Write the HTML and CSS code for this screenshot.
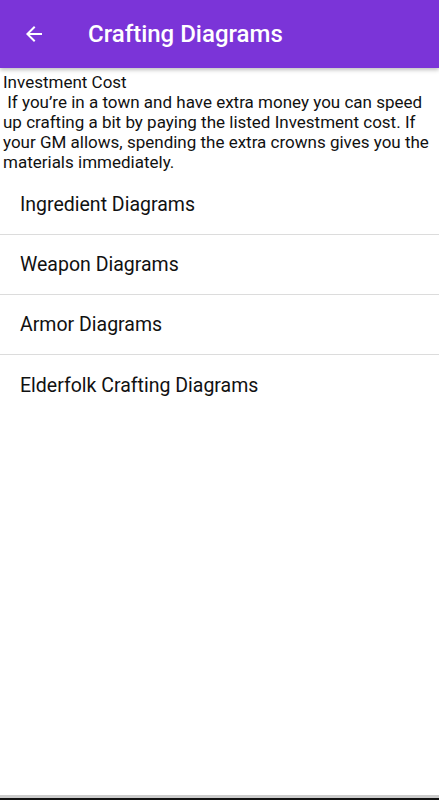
FILE: index.html
```html
<!DOCTYPE html>
<html lang="en">
<head>
    <meta charset="UTF-8">
    <meta name="viewport" content="width=device-width, initial-scale=1.0">
    <title>Crafting Diagrams</title>
    <link rel="stylesheet" href="styles.css">
</head>
<body>
    <div class="page">
        <header class="app-bar">
            <button class="back">
                <svg width="24" height="24" viewBox="0 0 24 24"><path d="M20 11H7.83l5.59-5.59L12 4l-8 8 8 8 1.41-1.41L7.83 13H20v-2z" fill="#fff"/></svg>
            </button>
            <h1>Crafting Diagrams</h1>
        </header>

        <p class="intro">Investment Cost<br>&nbsp;If you’re in a town and have extra money you can speed up crafting a bit by paying the listed Investment cost. If your GM allows, spending the extra crowns gives you the materials immediately.</p>

        <ul class="menu">
            <li>Ingredient Diagrams</li>
            <li>Weapon Diagrams</li>
            <li>Armor Diagrams</li>
            <li>Elderfolk Crafting Diagrams</li>
        </ul>
    </div>
</body>
</html>
```

FILE: styles.css
```css
* {
    margin: 0;
    padding: 0;
    box-sizing: border-box;
}

body {
    font-family: Roboto, "Noto Sans", sans-serif;
    background-color: #fff;
    color: #111;
}

.page {
    height: 800px;
    display: flex;
    flex-direction: column;
    border-bottom: 2px solid #111;
    box-shadow: inset 0 -3px 0 #ccc;
}

.app-bar {
    height: 68px;
    background-color: #7b34d8;
    color: #fff;
    display: flex;
    align-items: center;
    padding-left: 22px;
    box-shadow: 0 2px 4px rgba(0, 0, 0, 0.25);
}

.back {
    background: none;
    border: none;
    display: flex;
    width: 24px;
    height: 24px;
    margin-right: 42px;
}

.app-bar h1 {
    font-size: 24px;
    font-weight: 500;
}

.intro {
    font-size: 17px;
    line-height: 20px;
    padding: 4px 3px 0 3px;
}

.menu {
    list-style: none;
    margin-top: 3px;
}

.menu li {
    height: 60px;
    display: flex;
    align-items: center;
    padding-left: 20px;
    font-size: 19.5px;
    border-bottom: 1px solid #dcdcdc;
}

.menu li:last-child {
    border-bottom: none;
}
```
